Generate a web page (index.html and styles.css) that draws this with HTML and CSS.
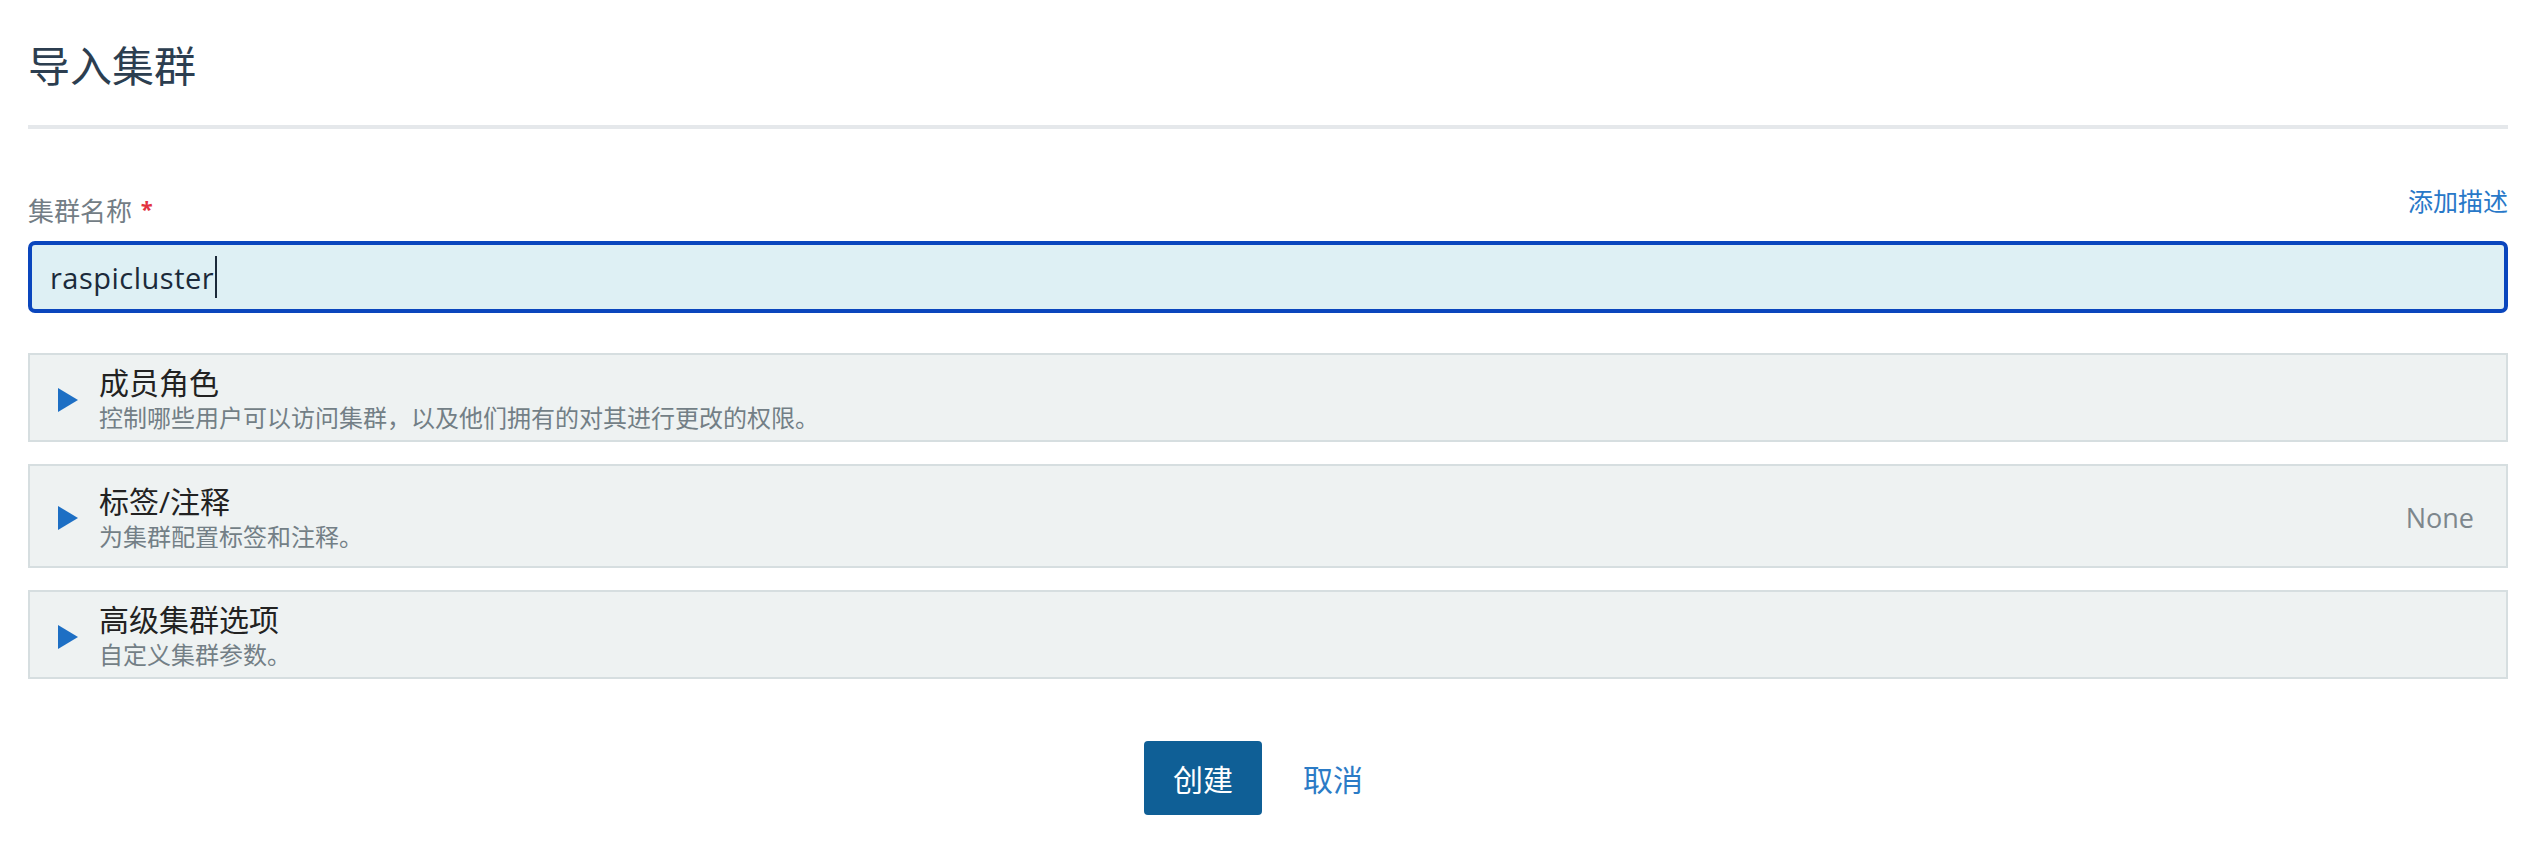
FILE: index.html
```html
<!DOCTYPE html>
<html lang="zh-CN">
<head>
<meta charset="utf-8">
<title>导入集群</title>
<link rel="stylesheet" href="styles.css">
</head>
<body>
<div class="page">
  <h1 class="title">导入集群</h1>
  <div class="divider"></div>

  <div class="field">
    <div class="field-head">
      <label class="label">集群名称 <span class="req">*</span></label>
      <a class="link">添加描述</a>
    </div>
    <div class="input"><span class="value">raspicluster</span><span class="caret"></span></div>
  </div>

  <div class="sections">
    <div class="section">
      <span class="arrow"></span>
      <div class="sec-text">
        <div class="sec-title">成员角色</div>
        <div class="sec-sub">控制哪些用户可以访问集群，以及他们拥有的对其进行更改的权限。</div>
      </div>
    </div>
    <div class="section">
      <span class="arrow"></span>
      <div class="sec-text">
        <div class="sec-title">标签/注释</div>
        <div class="sec-sub">为集群配置标签和注释。</div>
      </div>
      <div class="sec-right">None</div>
    </div>
    <div class="section">
      <span class="arrow"></span>
      <div class="sec-text">
        <div class="sec-title">高级集群选项</div>
        <div class="sec-sub">自定义集群参数。</div>
      </div>
    </div>
  </div>

  <div class="actions">
    <button class="btn btn-primary">创建</button>
    <button class="btn btn-link">取消</button>
  </div>
</div>
</body>
</html>
```
FILE: styles.css
```css
* { box-sizing: border-box; }

html, body {
  margin: 0;
  padding: 0;
  background: #ffffff;
}

body {
  font-family: "Open Sans", "Noto Sans CJK SC", sans-serif;
  color: #222;
}

.page {
  padding: 41px 38px 0 28px;
}

.title {
  margin: 0;
  font-size: 42px;
  line-height: 50px;
  font-weight: 400;
  color: #2c3e50;
}

.divider {
  margin-top: 34px;
  height: 4px;
  background: #e5e8eb;
}

.field {
  margin-top: 56px;
}

.field-head {
  display: flex;
  justify-content: space-between;
  align-items: flex-start;
}

.label {
  margin-top: 7px;
  font-size: 26px;
  line-height: 32px;
  color: #737d85;
}

.req {
  color: #e2333f;
  font-size: 22px;
  vertical-align: 4px;
  font-weight: 700;
  margin-left: 2px;
}

.link {
  font-size: 25px;
  line-height: 32px;
  color: #2878c8;
  cursor: pointer;
}

.input {
  margin-top: 14px;
  height: 72px;
  border: 4px solid #0a46bd;
  border-radius: 7px;
  background: #def0f4;
  padding-left: 18px;
  display: flex;
  align-items: center;
  font-size: 29px;
  letter-spacing: 0.5px;
  color: #1b2a3a;
}

.caret {
  display: inline-block;
  width: 2px;
  height: 42px;
  background: #1b2a3a;
  margin-left: 1px;
}

.sections {
  margin-top: 40px;
  display: flex;
  flex-direction: column;
  gap: 22px;
}

.section {
  display: flex;
  align-items: center;
  min-height: 89px;
  border: 2px solid #d6dee0;
  background: #eef2f2;
  padding: 4px 32px 0 28px;
}

.arrow {
  width: 0;
  height: 0;
  border-top: 12px solid transparent;
  border-bottom: 12px solid transparent;
  border-left: 20px solid #1d6fc4;
  margin-right: 21px;
  flex: none;
}

.sec-text {
  flex: 1;
}

.sec-title {
  font-size: 30px;
  line-height: 34px;
  color: #222;
}

.sec-sub {
  font-size: 24px;
  line-height: 30px;
  padding-top: 3px;
  color: #737f86;
}

.sec-right {
  font-size: 27px;
  line-height: 40px;
  padding: 28px 0;
  color: #7d878d;
}

.actions {
  margin-top: 62px;
  display: flex;
  justify-content: center;
  gap: 12px;
}

.btn {
  font-family: "Open Sans", "Noto Sans CJK SC", sans-serif;
  font-size: 30px;
  height: 74px;
  padding: 0 29px;
  border: none;
  border-radius: 4px;
  cursor: pointer;
}

.btn-primary {
  background: #0f5f96;
  color: #ffffff;
}

.btn-link {
  background: transparent;
  color: #2b7bc6;
}
```
